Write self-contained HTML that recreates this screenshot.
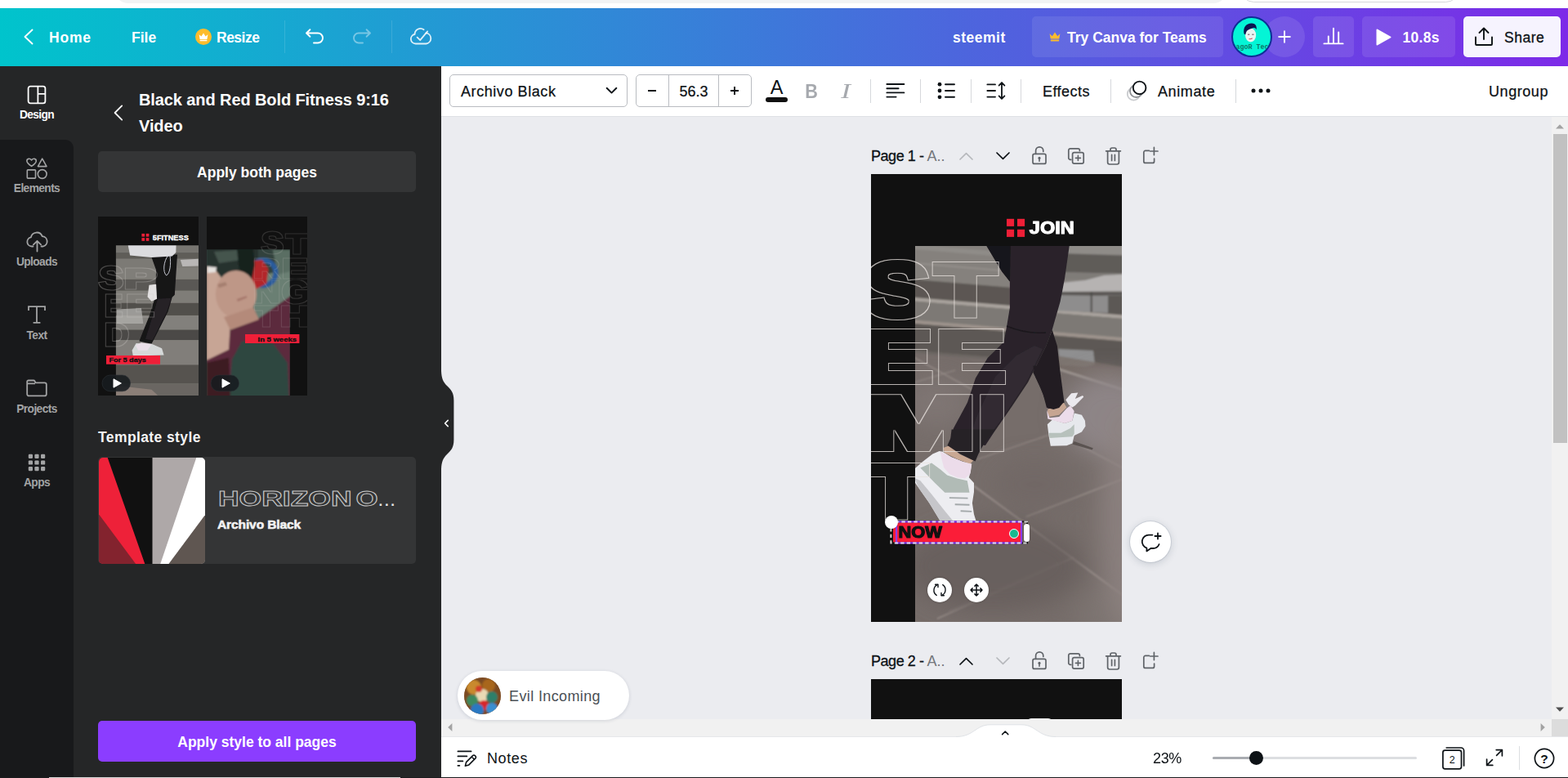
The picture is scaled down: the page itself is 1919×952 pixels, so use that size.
<!DOCTYPE html>
<html lang="en">
<head>
<meta charset="utf-8">
<title>steemit - Canva</title>
<style>
*{box-sizing:border-box;margin:0;padding:0}
html,body{width:1919px;height:952px;overflow:hidden;background:#fff}
body{font-family:"Liberation Sans",sans-serif;font-size:17.5px;color:#0d1216;position:relative}
.abs{position:absolute}
svg{display:block;overflow:visible}
/* top browser strip */
#chrome{position:absolute;left:0;top:0;width:1919px;height:10px;background:#fff}
#chrome .pill{position:absolute;left:140px;top:-30px;width:1362px;height:34px;border-radius:17px;background:#f1f3f4}
#chrome .pill2{position:absolute;left:1518px;top:-30px;width:268px;height:33px;border-radius:17px;border:1px solid #d5d7da;background:#fff}
/* header */
#header{position:absolute;left:0;top:10px;width:1919px;height:71px;background:linear-gradient(90deg,#00c4cc 0%,#7d2ae8 100%);color:#fff;font-weight:700}
#header .t{position:absolute;top:1px;height:71px;line-height:71px;white-space:nowrap}
/* sidebar */
#side{position:absolute;left:0;top:81px;width:90px;height:870px;background:#252627}
#side .dark{position:absolute;left:0;top:90px;width:90px;height:781px;background:#18191b;border-top-right-radius:10px}
.nav{position:absolute;left:0;width:90px;height:90px;color:#a3a4a5;font-size:13.75px;font-weight:700;text-align:center}
.nav svg{position:absolute;left:32px;top:22px}
.nav span{position:absolute;left:0;width:90px;top:50px;line-height:20px;letter-spacing:-0.6px}
.nav.on{color:#fff}
/* panel */
#panel{position:absolute;left:90px;top:81px;width:450px;height:870px;background:#252627;color:#fff}

#panel .title{position:absolute;left:80px;top:25px;font-size:20px;font-weight:700;line-height:32px;letter-spacing:-0.1px;white-space:nowrap}
#panel .btn{position:absolute;left:30px;width:389px;height:50px;border-radius:5px;line-height:52px;text-align:center;font-weight:700}
#panel .thumb{position:absolute;top:184px;width:123px;height:219px;background:#111;overflow:hidden}
#panel .h{position:absolute;left:30px;top:439.5px;font-weight:700;line-height:28px;letter-spacing:0.4px;color:#f4f4f4}
#panel .card{position:absolute;left:30px;top:478px;width:389px;height:131px;border-radius:5px;background:#343536;overflow:hidden}
#handle{position:absolute;left:540px;top:453px;width:16px;height:122px;z-index:5}
/* toolbar */
#tool{position:absolute;left:540px;top:81px;width:1379px;height:62px;background:#fff;border-bottom:1px solid #dfe1e5}
.tt{position:absolute;top:0.5px;height:60px;line-height:61px;font-size:18px;white-space:nowrap;color:#0d1216;-webkit-text-stroke:0.25px #0d1216}
.dv{position:absolute;top:16px;width:1px;height:29px;background:#d6d8dc}
/* canvas */
#canvas{position:absolute;left:540px;top:143px;width:1359px;height:738px;background:#ebecf0;overflow:hidden}
.pt{position:absolute;font-size:18px;line-height:30px;white-space:nowrap;color:#0d1216}
.pt .g{color:#73767b}
.fb{width:30px;height:30px;border-radius:50%;background:#fff;box-shadow:0 0 3px rgba(0,0,0,.25)}
#vscroll{position:absolute;left:1899px;top:143px;width:20px;height:738px;background:#f1f1f1}
#hscroll{position:absolute;left:540px;top:880px;width:1379px;height:21px;background:#f1f1f1}
#footer{position:absolute;left:540px;top:901px;width:1379px;height:50px;background:#fff;box-shadow:inset 0 1px 0 #e6e7ea}
#bottomline{position:absolute;left:0;top:951px;width:1919px;height:1px;background:#1b1c1e}
</style>
</head>
<body>
<div id="chrome"><div class="pill"></div><div class="pill2"></div></div>
<div id="header">
<svg class="abs" style="left:28px;top:25px" width="14" height="20" viewBox="0 0 14 20"><path d="M11.5 1.5 L2.5 10 L11.5 18.5" fill="none" stroke="#fff" stroke-width="1.9" stroke-linecap="round" stroke-linejoin="round"/></svg>
<div class="t" style="left:60px;letter-spacing:0.8px">Home</div>
<div class="t" style="left:161px">File</div>
<svg class="abs" style="left:239px;top:25px" width="20" height="20" viewBox="0 0 20 20"><circle cx="10" cy="10" r="10" fill="#fdbc2c"/><path d="M4.6 7.2 L7.4 9.6 L10 5.4 L12.6 9.6 L15.4 7.2 L14.4 13 H5.6 Z" fill="#fff"/><rect x="5.6" y="13.8" width="8.8" height="1.4" rx=".5" fill="#fff"/></svg>
<div class="t" style="left:265px;letter-spacing:-0.5px">Resize</div>
<div class="abs" style="left:348px;top:15px;width:1px;height:40px;background:rgba(255,255,255,.13)"></div>
<svg class="abs" style="left:373px;top:24px" width="24" height="20" viewBox="0 0 24 20"><path d="M6.4 2.2 L2 6.5 L6.4 10.8 M2.5 6.5 H16 a6 6 0 0 1 0 12 H11" fill="none" stroke="#fff" stroke-width="1.9" stroke-linecap="round" stroke-linejoin="round"/></svg>
<svg class="abs" style="left:431px;top:24px;opacity:.4" width="24" height="20" viewBox="0 0 24 20"><path d="M17.6 2.2 L22 6.5 L17.6 10.8 M21.5 6.5 H8 a6 6 0 0 0 0 12 H13" fill="none" stroke="#fff" stroke-width="1.9" stroke-linecap="round" stroke-linejoin="round"/></svg>
<div class="abs" style="left:479px;top:15px;width:1px;height:40px;background:rgba(255,255,255,.13)"></div>
<svg class="abs" style="left:501px;top:23px" width="28" height="22" viewBox="0 0 28 22"><path d="M20.4 7.4 a6.6 6.6 0 0 1 0.2 13.1 H7.6 a5.8 5.8 0 0 1 -1 -11.5 a7 7 0 0 1 11 -5.8" fill="none" stroke="#fff" stroke-opacity=".85" stroke-width="1.8" stroke-linecap="round" stroke-linejoin="round"/><path d="M9.6 12.6 L13.2 16.2 L22.2 5.4" fill="none" stroke="#fff" stroke-opacity=".85" stroke-width="1.8" stroke-linecap="round" stroke-linejoin="round"/></svg>
<div class="t" style="left:1166px;letter-spacing:0.5px">steemit</div>
<div class="abs" style="left:1263px;top:10px;width:234px;height:50px;border-radius:5px;background:rgba(255,255,255,.085)"></div>
<svg class="abs" style="left:1284px;top:29px" width="14" height="12" viewBox="0 0 14 12"><path d="M0.6 2.2 L3.8 5.2 L7 0.6 L10.2 5.2 L13.4 2.2 L12.2 8.6 H1.8 Z" fill="#fdbc2c"/><rect x="1.8" y="9.6" width="10.4" height="1.8" rx=".6" fill="#fdbc2c"/></svg>
<div class="t" style="left:1306px">Try Canva for Teams</div>
<div class="abs" style="left:1547px;top:10px;width:50px;height:50px;border-radius:50%;background:rgba(255,255,255,.1)"></div>
<svg class="abs" style="left:1562px;top:25px" width="20" height="20" viewBox="0 0 20 20"><path d="M10 3.2 V16.8 M3.2 10 H16.8" stroke="#fff" stroke-width="1.9" stroke-linecap="round" fill="none"/></svg>
<div class="abs" id="avatar" style="left:1507px;top:10px;width:50px;height:50px;border-radius:50%;background:#04f5d6;border:2px solid #0d2f96;overflow:hidden">
<svg width="46" height="46" viewBox="0 0 46 46"><ellipse cx="21.6" cy="21" rx="6.6" ry="8.4" fill="#e8f4f1"/><path d="M13.6 19.5 C11.6 11 17 6.2 23 6.4 C27.6 6.6 29.4 9.6 28.6 14.4 C28.2 12.6 26.6 11.4 24.6 12.2 C20.6 13.8 16.4 13.6 15.2 20.6 Z" fill="#0b1550"/><path d="M18 20.2h2.4M23.2 20.2h2.4" stroke="#6a4a5a" stroke-width="1"/><path d="M19.6 25.4 q2 1 4 -.6" stroke="#d04a5a" stroke-width="1.1" fill="none"/><text x="23.5" y="37.6" font-family="Liberation Mono, monospace" font-size="8.4" font-weight="700" fill="#0c7a6a" text-anchor="middle" letter-spacing="0">SagoR Tech</text></svg></div>
<div class="abs" style="left:1607px;top:10px;width:50px;height:50px;border-radius:5px;background:rgba(255,255,255,.1)"></div>
<svg class="abs" style="left:1619px;top:23px" width="26" height="24" viewBox="0 0 26 24"><path d="M1.4 20.4 H24.6 M6.8 20 V11.4 M13 20 V1.6 M19.2 20 V6.4" stroke="#fff" stroke-width="1.9" stroke-linecap="round" fill="none"/></svg>
<div class="abs" style="left:1667px;top:10px;width:114px;height:50px;border-radius:5px;background:rgba(255,255,255,.1)"></div>
<svg class="abs" style="left:1684px;top:25px" width="19" height="21" viewBox="0 0 19 21"><path d="M1.5 1.5 L17.5 10.5 L1.5 19.5 Z" fill="#fff" stroke="#fff" stroke-width="2" stroke-linejoin="round"/></svg>
<div class="t" style="left:1716.5px;letter-spacing:0.3px">10.8s</div>
<div class="abs" style="left:1791px;top:10px;width:119px;height:50px;border-radius:5px;background:#f6f3fe"></div>
<svg class="abs" style="left:1804px;top:23px" width="24" height="24" viewBox="0 0 24 24"><path d="M2 12.5 V21 a1 1 0 0 0 1 1 H21 a1 1 0 0 0 1 -1 V12.5 M12 15 V2 M6.5 7 L12 1.5 L17.5 7" fill="none" stroke="#0d1216" stroke-width="1.9" stroke-linecap="round" stroke-linejoin="round"/></svg>
<div class="t" style="left:1841px;color:#0d1216;font-weight:400;letter-spacing:0.5px;-webkit-text-stroke:0.3px #0d1216">Share</div>
</div>
<div id="side"><div class="dark"></div>
<div class="nav on" style="top:0"><svg width="26" height="26" viewBox="0 0 26 26"><rect x="2.6" y="2.6" width="20.8" height="20.8" rx="2.6" fill="none" stroke="currentColor" stroke-width="1.8"/><path d="M14.4 2.6 V23.4 M14.4 11.9 H23.4" stroke="currentColor" stroke-width="1.8" fill="none"/></svg><span>Design</span></div>
<div class="nav" style="top:90px"><svg width="26" height="26" viewBox="0 0 26 26"><path d="M6.6 10.4 C3.4 8.2 0.9 6.3 0.9 3.9 C0.9 1.2 4.6 0.2 6.6 2.9 C8.6 0.2 12.3 1.2 12.3 3.9 C12.3 6.3 9.8 8.2 6.6 10.4 Z" fill="none" stroke="currentColor" stroke-width="1.6" stroke-linejoin="round"/><path d="M19.7 1.2 L25 10.6 H14.4 Z" fill="none" stroke="currentColor" stroke-width="1.6" stroke-linejoin="round"/><rect x="1.3" y="14.9" width="10.2" height="10.2" rx=".8" fill="none" stroke="currentColor" stroke-width="1.6"/><circle cx="19.7" cy="20" r="5.4" fill="none" stroke="currentColor" stroke-width="1.6"/></svg><span>Elements</span></div>
<div class="nav" style="top:180px"><svg width="27" height="26" viewBox="0 0 27 26"><path d="M8.5 18.5 H6.8 a5.6 5.6 0 0 1 -0.9 -11.1 a7.2 7.2 0 0 1 13.8 -1.3 a6.3 6.3 0 0 1 1.2 12.4 H18.5" fill="none" stroke="currentColor" stroke-width="1.8" stroke-linecap="round" stroke-linejoin="round"/><path d="M13.5 24.6 V12.2 M8.9 16.4 L13.5 11.8 L18.1 16.4" fill="none" stroke="currentColor" stroke-width="1.8" stroke-linecap="round" stroke-linejoin="round"/></svg><span>Uploads</span></div>
<div class="nav" style="top:270px"><svg width="26" height="26" viewBox="0 0 26 26"><path d="M3 7 V2.2 H23 V7 M13 2.2 V21.8 M8.6 21.8 H17.4" fill="none" stroke="currentColor" stroke-width="1.8" stroke-linejoin="miter"/></svg><span>Text</span></div>
<div class="nav" style="top:360px"><svg width="26" height="26" viewBox="0 0 26 26"><path d="M1.2 6.6 V4.1 a1.6 1.6 0 0 1 1.6 -1.6 H9 a1.6 1.6 0 0 1 1.4 .8 L11.6 5.4 H22.6 a2.2 2.2 0 0 1 2.2 2.2 V19.2 a2.2 2.2 0 0 1 -2.2 2.2 H3.4 a2.2 2.2 0 0 1 -2.2 -2.2 Z M1.2 6.4 H11" fill="none" stroke="currentColor" stroke-width="1.8" stroke-linejoin="round"/></svg><span>Projects</span></div>
<div class="nav" style="top:450px"><svg width="26" height="26" viewBox="0 0 26 26" fill="currentColor"><rect x="2.8" y="2.8" width="5.2" height="5.2" rx="1.2"/><rect x="10.4" y="2.8" width="5.2" height="5.2" rx="1.2"/><rect x="18" y="2.8" width="5.2" height="5.2" rx="1.2"/><rect x="2.8" y="10.4" width="5.2" height="5.2" rx="1.2"/><rect x="10.4" y="10.4" width="5.2" height="5.2" rx="1.2"/><rect x="18" y="10.4" width="5.2" height="5.2" rx="1.2"/><rect x="2.8" y="18" width="5.2" height="5.2" rx="1.2"/><rect x="10.4" y="18" width="5.2" height="5.2" rx="1.2"/><rect x="18" y="18" width="5.2" height="5.2" rx="1.2"/></svg><span>Apps</span></div>
</div>
<div id="panel">
<svg class="abs" style="left:48px;top:47px" width="14" height="20" viewBox="0 0 14 20"><path d="M11.2 1.4 L2.6 10 L11.2 18.6" fill="none" stroke="#fff" stroke-width="1.8" stroke-linecap="round" stroke-linejoin="round"/></svg>
<div class="title">Black and Red Bold Fitness 9:16<br>Video</div>
<div class="btn" style="top:104px;background:#343536">Apply both pages</div>
<div class="thumb" id="th1" style="left:30px"><svg width="123" height="219" viewBox="0 0 123 219"><defs><filter id="t1b" x="-10%" y="-10%" width="120%" height="120%"><feGaussianBlur stdDeviation="0.6"/></filter><clipPath id="t1c"><rect x="21.9" y="35.3" width="102" height="184"/></clipPath><filter id="om1" filterUnits="userSpaceOnUse" x="-10" y="0" width="150" height="219"><feMorphology in="SourceAlpha" operator="erode" radius="0.5" result="e"/><feComposite in="SourceGraphic" in2="e" operator="out"/></filter></defs>
<rect width="123" height="219" fill="#111"/>
<g clip-path="url(#t1c)"><g filter="url(#t1b)"><rect x="10" y="25" width="130" height="210" fill="#7a7875"/><rect x="10" y="27.7" width="130" height="16.4" fill="#77756f"/><rect x="10" y="44.1" width="130" height="7.6" fill="#5f5d59"/><rect x="10" y="51.7" width="130" height="11.3" fill="#7c7a75"/><rect x="10" y="63.0" width="130" height="13.9" fill="#807e79"/><rect x="10" y="76.9" width="130" height="13.9" fill="#5a5854"/><rect x="10" y="90.7" width="130" height="15.1" fill="#7f7d78"/><rect x="10" y="105.8" width="130" height="15.1" fill="#514f4b"/><rect x="10" y="121.0" width="130" height="17.6" fill="#82807b"/><rect x="10" y="138.6" width="130" height="12.6" fill="#4c4a47"/><rect x="10" y="151.2" width="130" height="30.2" fill="#817e7a"/><rect x="10" y="181.5" width="130" height="22.7" fill="#56534f"/><rect x="10" y="204.1" width="130" height="27.7" fill="#6a6662"/><polygon points="100.8,52.9 122.7,51.7 122.7,60.5 103.3,61.0" fill="#b9b7b6"/><polygon points="22.7,113.4 52.9,112.1 55.4,131.0 22.7,131.0" fill="#aeacaa" opacity="0.8"/><polygon points="21.9,206.7 65.5,211.7 73.1,218.8 21.9,218.8" fill="#8c7f78"/><polygon points="64.3,46.6 97.0,46.6 93.8,95.8 90.7,98.8 85.7,115.9 73.1,141.1 65.5,155.7 50.4,152.5 54.9,141.1 63.0,121.0 70.1,98.3 71.1,65.5" fill="#151316"/><polygon points="73.1,100.8 89.5,99.8 84.4,115.9 73.1,138.6 66.8,151.2 58.0,149.9 65.5,126.0" fill="#2c272d" opacity="0.8"/><polygon points="35.3,27.7 95.8,27.7 95.3,44.1 90.7,48.4 65.5,49.9 39.1,47.4" fill="#dcdcdf"/><polygon points="62.5,83.7 71.1,82.7 72.1,100.8 65.5,103.8 60.5,98.3" fill="#e3e1e1"/><polygon points="41.6,163.8 46.6,155.0 65.5,155.7 78.1,161.3 80.6,169.4 42.8,170.4" fill="#d6d9d9"/><polygon points="45.9,157.5 52.9,154.2 65.5,156.2 60.5,163.8 49.1,163.8" fill="#eadfe8"/></g><path d="M86 47 C80 55 79 68 83.6 72 C88 70 89.6 58 88 47.6" fill="none" stroke="#d9dbe6" stroke-width=".9"/></g>
<g filter="url(#om1)" font-family="Liberation Sans, sans-serif" font-weight="700" fill="#cfcbc8" stroke="#cfcbc8" stroke-width="3.1" stroke-linejoin="miter" opacity="0.3"><text transform="translate(0.00 89.40) scale(1.1199 1)" x="0.66" y="0" font-size="40.84">S</text><text transform="translate(33.00 88.20) scale(1.7634 1)" x="-0.87" y="0" font-size="34.74">P</text><text transform="translate(9.00 122.20) scale(0.8979 1)" x="-1.01" y="0" font-size="36.92">E</text><text transform="translate(35.50 122.20) scale(1.4200 1)" x="-1.01" y="0" font-size="36.92">E</text><text transform="translate(9.00 157.70) scale(1.0909 1)" x="-1.10" y="0" font-size="38.37">D</text></g>
<g fill="#ee1f37"><rect x="53.4" y="20.9" width="3.7" height="3.7"/><rect x="58.7" y="20.9" width="3.7" height="3.7"/><rect x="53.4" y="26.1" width="3.7" height="3.7"/><rect x="58.7" y="26.1" width="3.7" height="3.7"/></g>
<text x="66.8" y="29" font-family="Liberation Sans, sans-serif" font-weight="700" font-size="9.6" fill="#fff" stroke="#fff" stroke-width=".35" textLength="44" lengthAdjust="spacingAndGlyphs">5FITNESS</text>
<rect x="10" y="170" width="66" height="10.7" fill="#f01f38"/>
<text x="13.4" y="178.4" font-family="Liberation Sans, sans-serif" font-weight="700" font-size="7.8" fill="#141414" stroke="#141414" stroke-width=".35" textLength="45.4" lengthAdjust="spacingAndGlyphs">For 5 days</text>
<rect x="5" y="194" width="34.6" height="19.8" rx="9.9" fill="#171b1f" fill-opacity=".88" stroke="#2c3136" stroke-width=".6"/><path d="M19 198.8 L28.4 204 L19 209.2 Z" fill="#fff" stroke="#fff" stroke-width="1" stroke-linejoin="round"/></svg></div>
<div class="thumb" id="th2" style="left:163px"><svg width="123" height="219" viewBox="0 0 123 219"><defs><filter id="t2b" x="-10%" y="-10%" width="120%" height="120%"><feGaussianBlur stdDeviation="1.3"/></filter><clipPath id="t2c"><rect x="0" y="40.3" width="101.8" height="179"/></clipPath><filter id="om2" filterUnits="userSpaceOnUse" x="-10" y="0" width="150" height="219"><feMorphology in="SourceAlpha" operator="erode" radius="0.5" result="e"/><feComposite in="SourceGraphic" in2="e" operator="out"/></filter></defs>
<rect width="123" height="219" fill="#111"/>
<g clip-path="url(#t2c)"><g filter="url(#t2b)"><rect x="-10" y="30" width="125" height="200" fill="#33423c"/><polygon points="-0.0,39.0 62.9,39.0 62.9,74.9 36.9,78.9 -0.0,65.0" fill="#27322e"/><polygon points="9.0,43.0 36.9,41.0 42.9,53.0 15.0,57.0" fill="#4d5c55" opacity="0.8"/><polygon points="56.9,72.9 102.8,65.0 102.8,100.9 62.9,124.9 56.9,122.9" fill="#6b7f73"/><polygon points="80.9,41.0 102.8,41.0 102.8,66.9 86.9,70.9" fill="#5a6e63"/><circle cx="68.9" cy="68.9" r="15.5" fill="none" stroke="#2a5c9c" stroke-width="6"/><polygon points="56.9,54.0 67.9,53.0 75.3,64.0 73.3,81.9 59.3,89.3 53.9,74.9" fill="#b3282b"/><polygon points="36.9,39.0 56.9,39.0 58.9,59.0 52.9,86.9 42.9,80.9 38.9,59.0" fill="#18211e"/><polygon points="-0.0,174.8 28.9,138.8 62.9,124.9 102.8,96.9 102.8,220.7 -0.0,220.7" fill="#5b2a3c"/><polygon points="30.9,174.8 42.9,152.8 80.9,154.8 98.8,178.8 100.8,220.7 27.0,220.7" fill="#2f4641"/><polygon points="-0.0,178.8 27.0,172.8 28.9,220.7 -0.0,220.7" fill="#3d1a24"/><polygon points="-0.0,61.0 9.0,63.0 21.0,78.9 28.9,130.8 27.0,162.8 -0.0,175.8" fill="#c7a595"/><ellipse cx="35.9" cy="94.9" rx="25" ry="29" fill="#be9787"/><polygon points="21.0,122.9 56.9,110.9 63.9,125.9 28.9,138.8" fill="#b48a7a"/><polygon points="1.0,61.0 12.0,62.0 11.0,67.9 1.0,68.9" fill="#e6e2df"/><polygon points="13.0,82.9 23.0,79.9 25.0,83.9 15.0,87.3" fill="#9a7565" opacity="0.7"/><polygon points="36.9,100.9 48.9,96.9 49.3,99.3 37.9,103.9" fill="#9a6a60" opacity="0.7"/></g></g>
<g filter="url(#om2)" font-family="Liberation Sans, sans-serif" font-weight="700" fill="#cfcbc8" stroke="#cfcbc8" stroke-width="3.1" stroke-linejoin="miter" opacity="0.17"><text transform="translate(66.00 45.30) scale(1.1260 1)" x="0.73" y="0" font-size="36.34">S</text><text transform="translate(95.50 44.70) scale(1.2647 1)" x="1.30" y="0" font-size="34.01">T</text><text transform="translate(58.00 74.70) scale(1.3376 1)" x="-0.78" y="0" font-size="33.28">R</text><text transform="translate(93.00 74.70) scale(1.4192 1)" x="-0.78" y="0" font-size="33.28">E</text><text transform="translate(58.00 104.70) scale(1.2643 1)" x="-1.01" y="0" font-size="36.92">N</text><text transform="translate(91.50 105.70) scale(1.1174 1)" x="0.06" y="0" font-size="39.83">G</text><text transform="translate(58.00 133.70) scale(1.2391 1)" x="1.30" y="0" font-size="35.47">T</text><text transform="translate(91.00 133.70) scale(1.3949 1)" x="-0.92" y="0" font-size="35.47">H</text></g>
<rect x="47" y="144" width="66.4" height="11" fill="#f01f38"/>
<text x="62.5" y="152.6" font-family="Liberation Sans, sans-serif" font-weight="700" font-size="7.8" fill="#141414" stroke="#141414" stroke-width=".35" textLength="47.5" lengthAdjust="spacingAndGlyphs">In 5 weeks</text>
<rect x="5" y="194" width="34.6" height="19.8" rx="9.9" fill="#171b1f" fill-opacity=".88" stroke="#2c3136" stroke-width=".6"/><path d="M19 198.8 L28.4 204 L19 209.2 Z" fill="#fff" stroke="#fff" stroke-width="1" stroke-linejoin="round"/></svg></div>
<div class="h">Template style</div>
<div class="card">
<svg class="abs" style="left:1px;top:1px;border-radius:5px;overflow:hidden" width="130" height="130" viewBox="0.5 0.5 130 130"><rect width="131" height="131" fill="#111"/><path d="M0 0 H11 L57 131 H0 Z" fill="#ee2139"/><path d="M0 69 L46 131 H0 Z" fill="#83232e"/><rect x="66" y="0" width="65" height="131" fill="#aea8a8"/><path d="M120 0 H131 V70 L85.7 131 H75.6 Z" fill="#fff"/><path d="M131 70 V131 H85.7 Z" fill="#5f5651"/></svg>
<svg class="abs" style="left:146px;top:38px" width="230" height="26" viewBox="0 0 230 26"><text y="21.6" font-family="Liberation Sans, sans-serif" font-weight="700" font-size="25.4" fill="none" stroke="#c9c9c9" stroke-width="0.9"><tspan x="1" textLength="163.5" lengthAdjust="spacingAndGlyphs">HORIZON</tspan> <tspan x="169.4" textLength="27" lengthAdjust="spacingAndGlyphs">O</tspan><tspan x="197.6" y="21.8" font-size="17" fill="#e6e6e6" stroke="none" letter-spacing="2.6">...</tspan></text></svg>
<div class="abs" style="left:146px;top:72px;font-weight:700;font-size:15.5px;line-height:22px;letter-spacing:-0.1px;color:#f2f2f2;-webkit-text-stroke:0.6px #f2f2f2;white-space:nowrap">Archivo Black</div>
</div>
<div class="btn" style="top:801px;background:#8b3dff">Apply style to all pages</div>
</div>

<div id="tool">
<div class="abs" style="left:10px;top:10px;width:218px;height:40px;border:1px solid #b9bcc1;border-radius:5px"></div>
<div class="tt" style="left:24px;letter-spacing:0.57px">Archivo Black</div>
<svg class="abs" style="left:201px;top:25px" width="15" height="10" viewBox="0 0 15 10"><path d="M1.6 1.8 L7.5 7.6 L13.4 1.8" fill="none" stroke="#0d1216" stroke-width="1.9" stroke-linecap="round" stroke-linejoin="round"/></svg>
<div class="abs" style="left:238px;top:10px;width:142px;height:40px;border:1px solid #b9bcc1;border-radius:5px"></div>
<div class="abs" style="left:278px;top:10px;width:1px;height:40px;background:#b9bcc1"></div>
<div class="abs" style="left:339px;top:10px;width:1px;height:40px;background:#b9bcc1"></div>
<div class="abs" style="left:253px;top:29px;width:10px;height:2px;background:#0d1216"></div>
<div class="tt" style="left:279px;width:60px;text-align:center">56.3</div>
<div class="abs" style="left:354px;top:29px;width:10px;height:2px;background:#0d1216"></div>
<div class="abs" style="left:358px;top:25px;width:2px;height:10px;background:#0d1216"></div>
<div class="abs" style="left:396.5px;top:11px;width:28px;text-align:center;font-size:23.5px;line-height:30px;color:#0d1216">A</div>
<div class="abs" style="left:397px;top:38px;width:27px;height:6px;border-radius:3px;background:#111"></div>
<div class="abs" style="left:440px;top:16px;width:26px;text-align:center;font-size:24px;font-weight:700;line-height:30px;color:#a6a9ae;transform:scaleX(.9)">B</div>
<div class="abs" style="left:482px;top:16px;width:26px;text-align:center;font-family:'Liberation Serif',serif;font-style:italic;font-size:26px;line-height:30px;color:#a6a9ae;transform:scaleX(1.35)">I</div>
<div class="dv" style="left:525px"></div>
<svg class="abs" style="left:543px;top:19px" width="26" height="22" viewBox="0 0 26 22"><path d="M2.4 3 H23.4 M2.4 8.2 H16.6 M2.4 13.4 H23.4 M2.4 18.6 H13.6" stroke="#0d1216" stroke-width="1.9" stroke-linecap="round" fill="none"/></svg>
<div class="dv" style="left:586px"></div>
<svg class="abs" style="left:606px;top:19px" width="26" height="22" viewBox="0 0 26 22"><circle cx="4" cy="3.2" r="2.4" fill="#0d1216"/><circle cx="4" cy="11" r="2.4" fill="#0d1216"/><circle cx="4" cy="18.8" r="2.4" fill="#0d1216"/><path d="M11 3.2 H22 M11 11 H22 M11 18.8 H22" stroke="#0d1216" stroke-width="1.9" stroke-linecap="round" fill="none"/></svg>
<div class="dv" style="left:648px"></div>
<svg class="abs" style="left:666px;top:18px" width="26" height="24" viewBox="0 0 26 24"><path d="M2.4 4.4 H12 M2.4 12 H12 M2.4 19.6 H12" stroke="#0d1216" stroke-width="1.9" stroke-linecap="round" fill="none"/><path d="M20 2.2 V21.8 M16.6 5.6 L20 2 L23.4 5.6 M16.6 18.4 L20 22 L23.4 18.4" stroke="#0d1216" stroke-width="1.8" stroke-linecap="round" stroke-linejoin="round" fill="none"/></svg>
<div class="dv" style="left:709px"></div>
<div class="tt" style="left:736px;letter-spacing:0.47px">Effects</div>
<div class="dv" style="left:819px"></div>
<svg class="abs" style="left:837px;top:16px" width="28" height="28" viewBox="0 0 28 28"><circle cx="10.4" cy="18" r="7.6" fill="#fff" stroke="#c9cbce" stroke-width="1.8"/><circle cx="13.6" cy="14.4" r="7.6" fill="#fff" stroke="#8f9296" stroke-width="1.8"/><circle cx="17.6" cy="10.4" r="7.8" fill="#fff" stroke="#0d1216" stroke-width="1.9"/></svg>
<div class="tt" style="left:877px;letter-spacing:0.61px">Animate</div>
<div class="dv" style="left:972px"></div>
<svg class="abs" style="left:991px;top:27px" width="24" height="6" viewBox="0 0 24 6"><circle cx="3" cy="3" r="2.5" fill="#0d1216"/><circle cx="12" cy="3" r="2.5" fill="#0d1216"/><circle cx="21" cy="3" r="2.5" fill="#0d1216"/></svg>
<div class="tt" style="left:1282px;letter-spacing:0.56px">Ungroup</div>
</div>
<div id="canvas"><div class="abs" style="left:-540px;top:-143px;width:1919px;height:952px">
<div class="pt" style="left:1066px;top:175.5px"><span style="letter-spacing:-0.45px;-webkit-text-stroke:0.3px #0d1216">Page 1 -</span><span class="g"> A..</span></div>
<svg class="abs" style="left:1173px;top:184.5px" width="19" height="12" viewBox="0 0 19 12"><path d="M2 10 L9.5 2.6 L17 10" fill="none" stroke="#b6b8bc" stroke-width="1.7" stroke-linecap="round" stroke-linejoin="round"/></svg>
<svg class="abs" style="left:1218px;top:184.5px" width="19" height="12" viewBox="0 0 19 12"><path d="M2 2 L9.5 9.4 L17 2" fill="none" stroke="#0d1216" stroke-width="1.7" stroke-linecap="round" stroke-linejoin="round"/></svg>
<svg class="abs" style="left:1262px;top:177.5px" width="20" height="24" viewBox="0 0 20 24"><rect x="2" y="10.4" width="16" height="12" rx="2" fill="none" stroke="#5f6368" stroke-width="1.7"/><path d="M5.6 10 V6.4 a4.6 4.6 0 0 1 9.2 0 V7.4" fill="none" stroke="#5f6368" stroke-width="1.7" stroke-linecap="round"/><circle cx="10" cy="15.4" r="1.6" fill="#5f6368"/><path d="M10 16 V19.2" stroke="#5f6368" stroke-width="1.6" stroke-linecap="round"/></svg>
<svg class="abs" style="left:1306px;top:179.5px" width="22" height="22" viewBox="0 0 22 22"><rect x="6.6" y="6.6" width="13.6" height="13.6" rx="2.2" fill="none" stroke="#5f6368" stroke-width="1.7"/><path d="M4.8 15.4 H4 a2.2 2.2 0 0 1 -2.2 -2.2 V4 a2.2 2.2 0 0 1 2.2 -2.2 H13.2 a2.2 2.2 0 0 1 2.2 2.2 V4.6" fill="none" stroke="#5f6368" stroke-width="1.7" stroke-linecap="round"/><path d="M13.4 10.4 V16.4 M10.4 13.4 H16.4" stroke="#5f6368" stroke-width="1.6" stroke-linecap="round"/></svg>
<svg class="abs" style="left:1352px;top:178.5px" width="21" height="24" viewBox="0 0 21 24"><path d="M1.6 5.8 H19.4 M7 5.4 V4 a2 2 0 0 1 2 -2 H12 a2 2 0 0 1 2 2 V5.4 M3.6 6 V19.6 a2.4 2.4 0 0 0 2.4 2.4 H15 a2.4 2.4 0 0 0 2.4 -2.4 V6 M8.6 10.4 V17.4 M12.4 10.4 V17.4" fill="none" stroke="#5f6368" stroke-width="1.7" stroke-linecap="round" stroke-linejoin="round"/></svg>
<svg class="abs" style="left:1398px;top:178.5px" width="20" height="22" viewBox="0 0 20 22"><path d="M8.4 5.4 H3.8 a2 2 0 0 0 -2 2 V18.4 a2 2 0 0 0 2 2 H12.6 a2 2 0 0 0 2 -2 V15 M14.4 1.4 V10.6 M9.8 6 H19" fill="none" stroke="#5f6368" stroke-width="1.7" stroke-linecap="round" stroke-linejoin="round"/></svg>
<div class="abs" id="page1" style="left:1066px;top:213px;width:307px;height:548px;background:#111;overflow:hidden"><svg class="abs" style="left:0;top:0" width="307" height="548" viewBox="0 0 307 548">
<defs><filter id="b1" x="-10%" y="-10%" width="120%" height="120%"><feGaussianBlur stdDeviation="1.2"/></filter><filter id="b2" x="-10%" y="-10%" width="120%" height="120%"><feGaussianBlur stdDeviation="0.7"/></filter><filter id="b4" x="-50%" y="-50%" width="200%" height="200%"><feGaussianBlur stdDeviation="14"/></filter><clipPath id="cp"><rect x="54" y="88" width="253" height="460"/></clipPath>
<filter id="ring" filterUnits="userSpaceOnUse" x="-30" y="80" width="360" height="480"><feMorphology in="SourceAlpha" operator="erode" radius="1" result="e"/><feComposite in="SourceGraphic" in2="e" operator="out"/></filter></defs>
<rect width="307" height="548" fill="#111"/>
<g clip-path="url(#cp)"><g filter="url(#b1)"><rect x="40" y="70" width="290" height="500" fill="#766d6b"/><polygon points="40.0,58.8 320.0,82.6 320.0,151.6 40.0,127.8" fill="#85817d"/><polygon points="40.0,84.8 320.0,108.6 320.0,114.6 40.0,90.8" fill="#8f8c88"/><polygon points="40.0,106.8 320.0,130.6 320.0,132.6 40.0,108.8" fill="#94908c"/><polygon points="40.0,127.8 320.0,151.6 320.0,173.6 40.0,149.8" fill="#5b5753"/><polygon points="40.0,149.8 320.0,173.6 320.0,178.1 40.0,154.3" fill="#a8a29c"/><polygon points="40.0,154.3 320.0,178.1 320.0,201.1 40.0,177.3" fill="#7d7975"/><polygon points="40.0,177.3 320.0,201.1 320.0,205.6 40.0,181.8" fill="#9c938c"/><polygon points="40.0,181.8 320.0,205.6 320.0,238.6 40.0,214.8" fill="#5d5854"/><polygon points="40.0,214.8 320.0,238.6 320.0,241.6 40.0,217.8" fill="#6d6763"/><polygon points="230.0,70.0 320.0,70.0 320.0,99.0 230.0,97.0" fill="#8f8c88"/><polygon points="230.0,97.0 320.0,100.0 320.0,122.0 230.0,120.0" fill="#5f5c58"/><polygon points="230.0,120.0 320.0,122.0 320.0,131.0 230.0,128.0" fill="#7f7c78"/><polygon points="233.0,133.0 262.0,130.0 285.0,124.0 320.0,122.0 320.0,143.0 233.0,144.0" fill="#b6b3b2"/><polygon points="228.0,144.0 320.0,144.5 320.0,148.5 228.0,148.0" fill="#5a5754"/><polygon points="226.0,148.0 290.0,149.0 290.0,170.0 226.0,167.0" fill="#8e8d8d"/><polygon points="290.0,149.0 320.0,149.0 320.0,172.0 290.0,170.0" fill="#5b5855"/><polygon points="268.7,144.0 270.7,144.0 270.7,169.0 268.7,169.0" fill="#4a4846"/><polygon points="229.0,214.0 272.0,216.0 274.0,233.0 262.0,236.0 231.0,234.0" fill="#8f8f90"/><polygon points="226.0,236.0 320.0,266.0 320.0,269.0 226.0,239.0" fill="#a89f9a" opacity="0.8"/><polygon points="226.0,222.0 320.0,238.0 320.0,266.0 226.0,236.0" fill="#786d68" opacity="0.8"/><line x1="125.4" y1="381.2" x2="320" y2="524.2" stroke="#a79c96" stroke-width="2.0" opacity="0.8"/><line x1="189.6" y1="419.4" x2="320" y2="368.6" stroke="#a79c96" stroke-width="1.5" opacity="0.7"/><line x1="81" y1="544" x2="248" y2="469" stroke="#a79c96" stroke-width="1.5" opacity="0.7"/><line x1="248.8" y1="328.1" x2="320" y2="366" stroke="#a79c96" stroke-width="1.5" opacity="0.7"/><line x1="130.4" y1="349" x2="216.8" y2="319.5" stroke="#a79c96" stroke-width="1.3" opacity="0.6"/><line x1="40" y1="217.5" x2="125.4" y2="264.6" stroke="#a79c96" stroke-width="1.5" opacity="0.7"/><line x1="40" y1="259" x2="103.2" y2="240" stroke="#a79c96" stroke-width="1.3" opacity="0.6"/><line x1="95" y1="535" x2="230" y2="475" stroke="#a79c96" stroke-width="1" opacity="0.4"/></g><g filter="url(#b4)"><ellipse cx="150" cy="480" rx="110" ry="55" fill="#665e5c" opacity=".85"/><ellipse cx="290" cy="295" rx="55" ry="50" fill="#90878a" opacity=".9"/><ellipse cx="200" cy="380" rx="50" ry="30" fill="#6f6765" opacity=".7"/><ellipse cx="300" cy="540" rx="50" ry="40" fill="#7f7674" opacity=".7"/><ellipse cx="80" cy="280" rx="40" ry="30" fill="#827976" opacity=".7"/><ellipse cx="315" cy="420" rx="35" ry="140" fill="#8e8482" opacity=".8"/></g><g filter="url(#b2)"><polygon points="221.7,190.6 227.9,210.3 231.6,242.4 236.5,279.4 229.1,288.1 216.8,286.8 206.9,259.7 198.2,242.4 214.3,210.3" fill="#231f24"/><polygon points="141.5,80.0 141.5,88.0 160.0,119.0 169.9,131.4 169.9,163.4 166.2,185.7 162.5,205.4 142.7,225.1 127.9,249.8 118.0,279.4 101.0,311.0 97.0,326.0 140.0,332.0 150.1,316.4 172.3,284.4 192.1,254.8 202.0,235.0 214.3,210.3 221.7,190.6 227.0,172.0 231.6,156.0 237.0,128.0 242.7,88.0 242.7,80.0" fill="#29242a"/><polygon points="178.0,222.0 200.0,210.0 210.0,214.0 190.0,255.0 160.0,300.0 140.0,326.0 118.0,334.0 128.0,300.0 152.0,248.0" fill="#363037" opacity="0.55"/><polygon points="141.5,80.0 141.5,88.0 160.0,119.0 169.9,131.4 171.0,80.0" fill="#19161a"/><path d="M166 186 Q190 196 214 194" fill="none" stroke="#18151a" stroke-width="1.4" opacity=".8"/><polygon points="248.7,327.1 271.8,335.2 270.6,337.5 246.4,330.5" fill="#4f4846" opacity="0.8"/><polygon points="215.8,306.3 222.1,300.5 237.1,305.1 246.4,301.7 248.7,292.4 257.9,294.7 261.9,301.7 262.5,308.6 257.9,315.5 248.7,320.1 246.4,329.4 239.4,332.3 219.8,332.8 217.5,320.1" fill="#e6e8ec"/><polygon points="217.5,316.7 232.5,316.7 244.0,310.9 248.7,306.3 248.7,317.8 246.4,321.3 218.6,323.0" fill="#b7c1bc"/><polygon points="216.3,287.8 236.0,279.7 239.4,285.5 230.2,294.7 218.6,297.0 215.8,292.4" fill="#c6a592"/><polygon points="215.2,289.0 218.6,298.2 230.2,297.0 239.4,286.7 244.0,283.2 248.7,290.1 246.4,301.7 237.1,305.1 224.4,301.7 216.3,299.4" fill="#ecdcea"/><polygon points="238.3,276.3 245.2,268.2 253.3,267.6 249.8,275.1 259.1,271.1 260.2,272.8 249.8,283.2 246.4,285.5 241.7,282.0" fill="#ebe9ee"/><polygon points="198.4,234.7 229.0,234.7 230.2,254.3 233.7,269.3 236.2,278.6 230.2,286.1 223.3,288.0 214.9,285.7 210.6,269.3 201.3,248.5" fill="#221e23"/><polygon points="52.2,361.6 63.1,352.1 75.4,342.5 83.6,339.1 87.7,339.8 98.6,346.6 112.3,352.1 123.2,354.8 121.9,364.4 119.8,371.2 126.0,378.0 126.0,389.0 123.9,402.6 126.0,416.3 129.4,427.2 86.3,427.2 71.3,402.6 59.0,384.9 52.2,375.3" fill="#ededf1"/><polygon points="60.4,359.6 74.1,353.4 85.0,361.6 93.2,368.5 105.5,372.6 117.8,375.3 120.5,389.7 90.4,389.7 78.2,378.0" fill="#b1bbb6"/><polygon points="52.2,371.2 59.0,384.9 71.3,402.6 86.3,427.2 102.7,427.2 89.1,410.8 74.1,391.7 60.4,375.3" fill="#c6c6ca"/><polygon points="88.4,335.0 95.9,332.3 108.2,342.5 125.3,350.4 121.2,354.8 105.5,348.7 89.8,340.9" fill="#c9a893"/><polygon points="85.0,339.8 98.6,346.6 112.3,352.1 123.2,354.8 121.2,367.1 115.0,372.6 105.5,371.2 95.9,367.1 89.1,358.9 86.3,348.0" fill="#ecdcea"/><polygon points="98.6,312.5 151.9,312.5 139.6,327.5 131.4,342.5 127.6,351.4 109.6,342.8 93.5,331.9 97.3,323.4" fill="#262127"/><line x1="95.9" y1="396.1" x2="118.5" y2="396.6" stroke="#a4a9ab" stroke-width="1.9"/><line x1="102.7" y1="404.3" x2="120.5" y2="404.8" stroke="#a4a9ab" stroke-width="1.9"/><line x1="109.6" y1="412.2" x2="123.2" y2="412.9" stroke="#a4a9ab" stroke-width="1.9"/></g></g>
<g fill="#ee1f37"><rect x="166" y="54.8" width="9.1" height="9.1"/><rect x="179" y="54.8" width="9.1" height="9.1"/><rect x="166" y="67.8" width="9.1" height="9.1"/><rect x="179" y="67.8" width="9.1" height="9.1"/></g>
<text x="193.8" y="72.6" font-family="Liberation Sans, sans-serif" font-weight="700" font-size="22" fill="#fff" stroke="#fff" stroke-width="1.1" stroke-linejoin="round" textLength="55" lengthAdjust="spacingAndGlyphs">JOIN</text>
<g filter="url(#ring)" font-family="Liberation Sans, sans-serif" font-weight="700" fill="#e9e3df" stroke="#e9e3df" stroke-width="8" stroke-linejoin="miter" opacity=".78"><text transform="translate(-10.00 173.80) scale(1.2590 1)" x="2.02" y="0" font-size="94.91">S</text><text transform="translate(74.00 171.50) scale(1.3502 1)" x="3.50" y="0" font-size="89.39">T</text><text transform="translate(-8.00 254.10) scale(1.4442 1)" x="-2.07" y="0" font-size="89.10">E</text><text transform="translate(82.50 254.10) scale(1.4271 1)" x="-2.07" y="0" font-size="89.10">E</text><text transform="translate(-8.00 336.00) scale(1.8670 1)" x="-2.13" y="0" font-size="90.12">M</text><text transform="translate(133.40 336.00) scale(1.4041 1)" x="-2.13" y="0" font-size="90.12">I</text><text transform="translate(-10.50 420.00) scale(1.3425 1)" x="3.50" y="0" font-size="89.97">T</text></g>
<rect x="27" y="425.5" width="157.5" height="26.5" fill="#fb1d38"/>
<text x="33.5" y="445" font-family="Liberation Sans, sans-serif" font-weight="700" font-size="20" fill="#111" stroke="#111" stroke-width="1.2" stroke-linejoin="round" textLength="53.5" lengthAdjust="spacingAndGlyphs">NOW</text>
</svg></div>
<!-- selection -->
<svg class="abs" style="left:1080px;top:630px" width="190" height="45" viewBox="1080 630 190 45"><rect x="1090.4" y="638.4" width="166.6" height="26" fill="none" stroke="#111" stroke-width="2"/><rect x="1097.1" y="638.4" width="152.9" height="26" fill="none" stroke="#8b3dff" stroke-width="2"/><rect x="1090.4" y="638.4" width="166.6" height="26" fill="none" stroke="#fff" stroke-opacity=".82" stroke-width="2" stroke-dasharray="4.4 3.1" stroke-dashoffset="2"/></svg>
<div class="abs" style="left:1083px;top:631px;width:16px;height:16px;border-radius:50%;background:#fff;box-shadow:0 0 3px rgba(0,0,0,.35)"></div>
<div class="abs" style="left:1252.5px;top:640.5px;width:7px;height:22px;border-radius:3.5px;background:#fff;box-shadow:0 0 2px rgba(0,0,0,.3)"></div>
<div class="abs" style="left:1234.5px;top:646.5px;width:12px;height:12px;border-radius:50%;background:#17b890;border:1px solid #fff"></div>
<div class="abs fb" style="left:1135px;top:706.5px"><svg width="30" height="30" viewBox="0 0 30 30"><path d="M11.2 21.4 A7.4 7.4 0 0 1 12.6 8.4 M18.8 8.6 A7.4 7.4 0 0 1 17.4 21.6" fill="none" stroke="#0d1216" stroke-width="1.4" stroke-linecap="round"/><path d="M9.6 8.2 H13 V11.6 M20.4 21.8 H17 V18.4" fill="none" stroke="#0d1216" stroke-width="1.4" stroke-linecap="round" stroke-linejoin="round"/></svg></div>
<div class="abs fb" style="left:1180px;top:706.5px"><svg width="30" height="30" viewBox="0 0 30 30"><path d="M15 8 V22 M8 15 H22 M12.9 10.1 L15 8 L17.1 10.1 M12.9 19.9 L15 22 L17.1 19.9 M10.1 12.9 L8 15 L10.1 17.1 M19.9 12.9 L22 15 L19.9 17.1" fill="none" stroke="#0d1216" stroke-width="1.5" stroke-linecap="round" stroke-linejoin="round"/></svg></div>
<div class="abs" style="left:1383px;top:638px;width:50px;height:50px;border-radius:50%;background:#fff;box-shadow:0 0 0 1px rgba(57,76,96,.12),0 2px 10px rgba(57,76,96,.22)"><svg class="abs" style="left:12px;top:12px" width="28" height="28" viewBox="0 0 28 28"><path d="M15.4 4.6 H11 a8.2 8.2 0 0 0 -2.6 16 V24.4 L13.4 21 H16 a8.2 8.2 0 0 0 7.6 -5" fill="none" stroke="#0d1216" stroke-width="1.8" stroke-linecap="round" stroke-linejoin="round"/><path d="M22 2.4 V9.6 M18.4 6 H25.6" stroke="#0d1216" stroke-width="1.8" stroke-linecap="round"/></svg></div>
<div class="pt" style="left:1066px;top:793.5px"><span style="letter-spacing:-0.45px;-webkit-text-stroke:0.3px #0d1216">Page 2 -</span><span class="g"> A..</span></div>
<svg class="abs" style="left:1173px;top:802.5px" width="19" height="12" viewBox="0 0 19 12"><path d="M2 10 L9.5 2.6 L17 10" fill="none" stroke="#0d1216" stroke-width="1.7" stroke-linecap="round" stroke-linejoin="round"/></svg>
<svg class="abs" style="left:1218px;top:802.5px" width="19" height="12" viewBox="0 0 19 12"><path d="M2 2 L9.5 9.4 L17 2" fill="none" stroke="#b6b8bc" stroke-width="1.7" stroke-linecap="round" stroke-linejoin="round"/></svg>
<svg class="abs" style="left:1262px;top:795.5px" width="20" height="24" viewBox="0 0 20 24"><rect x="2" y="10.4" width="16" height="12" rx="2" fill="none" stroke="#5f6368" stroke-width="1.7"/><path d="M5.6 10 V6.4 a4.6 4.6 0 0 1 9.2 0 V7.4" fill="none" stroke="#5f6368" stroke-width="1.7" stroke-linecap="round"/><circle cx="10" cy="15.4" r="1.6" fill="#5f6368"/><path d="M10 16 V19.2" stroke="#5f6368" stroke-width="1.6" stroke-linecap="round"/></svg>
<svg class="abs" style="left:1306px;top:797.5px" width="22" height="22" viewBox="0 0 22 22"><rect x="6.6" y="6.6" width="13.6" height="13.6" rx="2.2" fill="none" stroke="#5f6368" stroke-width="1.7"/><path d="M4.8 15.4 H4 a2.2 2.2 0 0 1 -2.2 -2.2 V4 a2.2 2.2 0 0 1 2.2 -2.2 H13.2 a2.2 2.2 0 0 1 2.2 2.2 V4.6" fill="none" stroke="#5f6368" stroke-width="1.7" stroke-linecap="round"/><path d="M13.4 10.4 V16.4 M10.4 13.4 H16.4" stroke="#5f6368" stroke-width="1.6" stroke-linecap="round"/></svg>
<svg class="abs" style="left:1352px;top:796.5px" width="21" height="24" viewBox="0 0 21 24"><path d="M1.6 5.8 H19.4 M7 5.4 V4 a2 2 0 0 1 2 -2 H12 a2 2 0 0 1 2 2 V5.4 M3.6 6 V19.6 a2.4 2.4 0 0 0 2.4 2.4 H15 a2.4 2.4 0 0 0 2.4 -2.4 V6 M8.6 10.4 V17.4 M12.4 10.4 V17.4" fill="none" stroke="#5f6368" stroke-width="1.7" stroke-linecap="round" stroke-linejoin="round"/></svg>
<svg class="abs" style="left:1398px;top:796.5px" width="20" height="22" viewBox="0 0 20 22"><path d="M8.4 5.4 H3.8 a2 2 0 0 0 -2 2 V18.4 a2 2 0 0 0 2 2 H12.6 a2 2 0 0 0 2 -2 V15 M14.4 1.4 V10.6 M9.8 6 H19" fill="none" stroke="#5f6368" stroke-width="1.7" stroke-linecap="round" stroke-linejoin="round"/></svg>
<div class="abs" style="left:1066px;top:831px;width:307px;height:80px;background:#111"></div>
<div class="abs" id="p2bump" style="left:1258px;top:878.6px;width:29px;height:8px;border-radius:4px;background:#e9e9e9"></div>
</div></div>
<div id="vscroll">
<svg class="abs" style="left:5px;top:8.6px" width="10" height="6" viewBox="0 0 10 6"><path d="M0 5.4 L5 0.2 L10 5.4 Z" fill="#a3a3a3"/></svg>
<div class="abs" style="left:2px;top:21px;width:17px;height:378px;background:#c1c1c1"></div>
<svg class="abs" style="left:5px;top:722.4px" width="10" height="6" viewBox="0 0 10 6"><path d="M0 0.6 L5 5.8 L10 0.6 Z" fill="#505050"/></svg>
</div>
<div id="hscroll">
<svg class="abs" style="left:8px;top:5.4px" width="6" height="10" viewBox="0 0 6 10"><path d="M5.4 0 L0.2 5 L5.4 10 Z" fill="#a3a3a3"/></svg>
<svg class="abs" style="left:1345px;top:5.4px" width="6" height="10" viewBox="0 0 6 10"><path d="M0.6 0 L5.8 5 L0.6 10 Z" fill="#a3a3a3"/></svg>
<div class="abs" style="left:1359px;top:0;width:20px;height:21px;background:#dcdcdc"></div>

</div>
<div id="footer">
<svg class="abs" style="left:19px;top:16px" width="25" height="22" viewBox="0 0 25 22"><path d="M1.4 2.4 H17.6 M1.4 8.4 H12.4 M1.4 14.4 H7.4 M1.4 19.8 H3.4" fill="none" stroke="#0d1216" stroke-width="1.7" stroke-linecap="round"/><path d="M10.4 20.2 L11.6 15.6 L19.6 7.6 a1.9 1.9 0 0 1 2.7 0 l0.6 0.6 a1.9 1.9 0 0 1 0 2.7 L14.9 18.9 Z M18.2 9 L21.5 12.3" fill="none" stroke="#0d1216" stroke-width="1.6" stroke-linejoin="round"/></svg>
<div class="pt" style="left:56px;top:11.5px;letter-spacing:0.59px">Notes</div>
<div class="pt" style="left:871px;top:11.5px;letter-spacing:-0.34px">23%</div>
<div class="abs" style="left:944px;top:25px;width:250px;height:3px;border-radius:1.5px;background:#dcdee1"></div>
<div class="abs" style="left:944px;top:25px;width:50px;height:3px;border-radius:1.5px;background:#a9acb1"></div>
<div class="abs" style="left:988.5px;top:18px;width:17px;height:17px;border-radius:50%;background:#0d1216"></div>
<svg class="abs" style="left:1224px;top:11.5px" width="30" height="30" viewBox="0 0 30 30"><rect x="1.9" y="5.2" width="22.6" height="22.6" rx="2.6" fill="#fff" stroke="#0d1216" stroke-width="1.7"/><path d="M6.2 2 H24 a3.6 3.6 0 0 1 3.6 3.6 V24" fill="none" stroke="#0d1216" stroke-width="1.7" stroke-linecap="round"/><text x="13.2" y="21.2" font-family="Liberation Sans, sans-serif" font-size="12.5" fill="#0d1216" text-anchor="middle">2</text></svg>
<svg class="abs" style="left:1278px;top:15px" width="22" height="22" viewBox="0 0 22 22"><path d="M13.2 1.6 H20.4 V8.8 M20 2 L13.6 8.4 M8.8 20.4 H1.6 V13.2 M2 20 L8.4 13.6" fill="none" stroke="#0d1216" stroke-width="1.7" stroke-linecap="round" stroke-linejoin="round"/></svg>
<div class="abs" style="left:1319px;top:12px;width:1px;height:29px;background:#dcdee1"></div>
<svg class="abs" style="left:1337px;top:14px" width="26" height="26" viewBox="0 0 26 26"><circle cx="13" cy="13" r="11.6" fill="none" stroke="#0d1216" stroke-width="1.7"/><text x="13" y="18.6" font-family="Liberation Sans, sans-serif" font-size="15.5" font-weight="700" fill="#0d1216" text-anchor="middle">?</text></svg>
</div>
<svg class="abs" style="left:1170px;top:885px;z-index:4" width="122" height="18" viewBox="0 0 122 18"><path d="M0 16.5 C22 16.5 24 1.8 42 1.8 H80 C98 1.8 100 16.5 122 16.5 V18 H0 Z" fill="#fff"/><path d="M0 16.5 C22 16.5 24 1.8 42 1.8 H80 C98 1.8 100 16.5 122 16.5" fill="none" stroke="#dfe2e6" stroke-width="1"/><path d="M56.6 13.6 L60.2 10 L63.8 13.6" fill="none" stroke="#0d1216" stroke-width="1.5" stroke-linecap="round" stroke-linejoin="round"/></svg>
<div id="bottomline"></div>
<div class="abs" style="left:60px;top:951px;width:430px;height:1px;background:#d9d9d9"></div>
<svg id="handle" viewBox="0 0 16 122"><path d="M0 0 V1 C0.5 10 2 14 7 19 C12 24 15.4 27 15.4 37 V85 C15.4 95 12 98 7 103 C2 108 0.5 112 0 121 V122 Z" fill="#252627"/><path d="M8.2 61.4 L4.6 65 L8.2 68.6" fill="none" stroke="#fff" stroke-width="1.6" stroke-linecap="round" stroke-linejoin="round"/></svg>
<div class="abs" style="left:0;top:0;z-index:6">
<div class="abs" style="left:560px;top:821px;width:210px;height:60px;border-radius:30px;background:#fff;box-shadow:0 1px 4px rgba(40,50,80,.16)"></div>
<div class="abs" id="evil" style="left:568px;top:829px;width:45px;height:45px;border-radius:50%;overflow:hidden;background:#8a5a2c"><svg width="45" height="45" viewBox="0 0 45 45"><defs><filter id="b3"><feGaussianBlur stdDeviation="1"/></filter></defs><g filter="url(#b3)"><rect width="45" height="45" fill="#7a4a22"/><circle cx="12" cy="12" r="9" fill="#c98a2e"/><circle cx="30" cy="10" r="8" fill="#a8661f"/><circle cx="22" cy="22" r="8" fill="#e9d9b4"/><circle cx="34" cy="24" r="7" fill="#2f7f6a"/><circle cx="10" cy="28" r="7" fill="#3d8a5e"/><circle cx="24" cy="34" r="6" fill="#d8282c"/><circle cx="16" cy="40" r="8" fill="#2b78c2"/><circle cx="34" cy="38" r="7" fill="#3b8ed0"/><circle cx="18" cy="14" r="4" fill="#d23a2a"/></g></svg></div>
<div class="pt" style="left:623px;top:837px;color:#4b5056;letter-spacing:0.38px">Evil Incoming</div>

</div>
</body>
</html>
